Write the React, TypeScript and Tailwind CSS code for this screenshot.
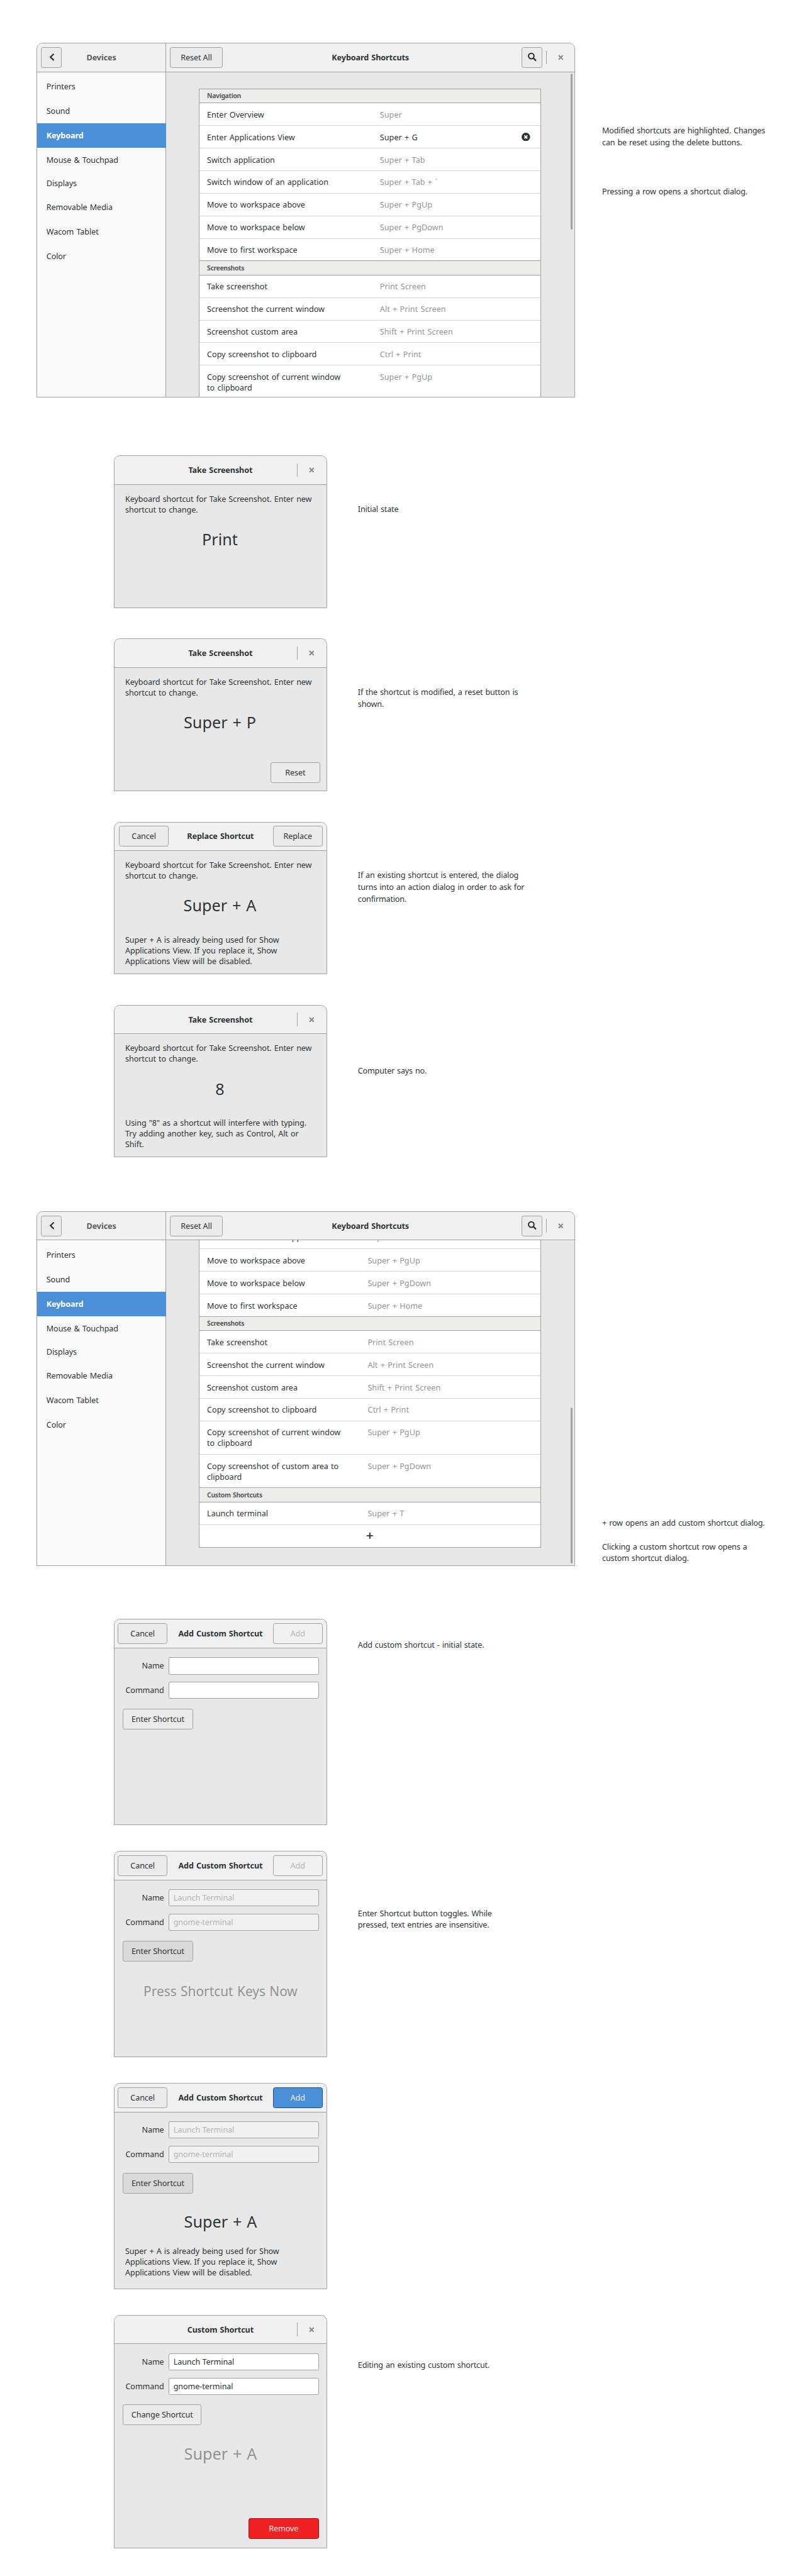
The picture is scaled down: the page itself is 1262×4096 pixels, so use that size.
import React from "react";
import type { ReactNode } from "react";

/* ---------- icons ---------- */

function BackIcon() {
  return (
    <svg className="ml-px h-3 w-[9px]" viewBox="0 0 9 12" fill="none">
      <path d="M7.7 0.8 L2.3 6 L7.7 11.2" stroke="#2e3436" strokeWidth="2.3" />
    </svg>
  );
}

function SearchIcon() {
  return (
    <svg className="h-4 w-4" viewBox="0 0 16 16" fill="none" stroke="#2e3436">
      <circle cx="6.6" cy="6.3" r="4.5" strokeWidth="2.1" />
      <path d="M9.8 9.5 L14.4 14.1" strokeWidth="2.5" />
    </svg>
  );
}

function CloseIcon() {
  return (
    <svg className="h-[9px] w-[9px]" viewBox="0 0 9 9" fill="none">
      <path d="M1 1 L8 8 M8 1 L1 8" stroke="#8b8d8b" strokeWidth="2.3" />
    </svg>
  );
}

function DeleteIcon() {
  return (
    <svg className="h-3.5 w-3.5" viewBox="0 0 14 14" fill="none">
      <circle cx="7" cy="7" r="7" fill="#2e3436" />
      <path d="M4.5 4.5 L9.5 9.5 M9.5 4.5 L4.5 9.5" stroke="#fff" strokeWidth="2" />
    </svg>
  );
}

function PlusIcon() {
  return (
    <svg className="h-2.5 w-2.5" viewBox="0 0 10 10" fill="none">
      <path d="M5 0 V10 M0 5 H10" stroke="#2e3436" strokeWidth="2" />
    </svg>
  );
}

/* ---------- basic controls ---------- */

const buttonTones = {
  normal: "border-[#a1a1a1] bg-[#ebebeb] text-[#2e3436]",
  disabled: "border-[#a1a1a1] bg-[#f1f1f1] text-[#b4b5b5]",
  pressed: "border-[#a1a1a1] bg-[#dadada] text-[#2e3436]",
  suggested: "border-[#1c5187] bg-[#4a90d9] text-[#eef4fb]",
  destructive: "border-[#a41014] bg-[#ef2123] text-[#fde9e9]",
};

function Button({
  tone = "normal",
  size = "w-[81px]",
  children,
}: {
  tone?: keyof typeof buttonTones;
  size?: string;
  children: ReactNode;
}) {
  return (
    <button
      type="button"
      className={`flex h-[34px] shrink-0 items-center justify-center rounded-[3.5px] border ${size} ${buttonTones[tone]}`}
    >
      {children}
    </button>
  );
}

function CloseArea({ margin = "" }: { margin?: string }) {
  return (
    <div className={`flex items-center ${margin}`}>
      <div className="h-[22px] w-px bg-[#a1a1a1]" />
      <div className="flex w-[46px] justify-center">
        <CloseIcon />
      </div>
    </div>
  );
}

/* ---------- settings window ---------- */

type Shortcut = { name: ReactNode; keys: string; modified?: boolean; tall?: boolean };
type Group = { title?: string; rows: Shortcut[]; addRow?: boolean };

const windowOfApp: Shortcut = { name: "Switch window of an application", keys: "Super + Tab + `" };

const workspaceRows: Shortcut[] = [
  { name: "Move to workspace above", keys: "Super + PgUp" },
  { name: "Move to workspace below", keys: "Super + PgDown" },
  { name: "Move to first workspace", keys: "Super + Home" },
];

const screenshotRows: Shortcut[] = [
  { name: "Take screenshot", keys: "Print Screen" },
  { name: "Screenshot the current window", keys: "Alt + Print Screen" },
  { name: "Screenshot custom area", keys: "Shift + Print Screen" },
  { name: "Copy screenshot to clipboard", keys: "Ctrl + Print" },
  {
    name: (
      <>
        Copy screenshot of current window
        <br />
        to clipboard
      </>
    ),
    keys: "Super + PgUp",
    tall: true,
  },
];

const topGroups: Group[] = [
  {
    title: "Navigation",
    rows: [
      { name: "Enter Overview", keys: "Super" },
      { name: "Enter Applications View", keys: "Super + G", modified: true },
      { name: "Switch application", keys: "Super + Tab" },
      windowOfApp,
      ...workspaceRows,
    ],
  },
  { title: "Screenshots", rows: screenshotRows },
];

const scrolledGroups: Group[] = [
  { rows: [windowOfApp, ...workspaceRows] },
  {
    title: "Screenshots",
    rows: [
      ...screenshotRows,
      {
        name: (
          <>
            Copy screenshot of custom area to
            <br />
            clipboard
          </>
        ),
        keys: "Super + PgDown",
        tall: true,
      },
    ],
  },
  { title: "Custom Shortcuts", rows: [{ name: "Launch terminal", keys: "Super + T" }], addRow: true },
];

function ShortcutRow({
  row,
  nameWidth,
  last,
  scrolledOff,
}: {
  row: Shortcut;
  nameWidth: string;
  last: boolean;
  scrolledOff: boolean;
}) {
  return (
    <div
      className={`flex shrink-0 border-b bg-white pl-3 tracking-[-0.03px] ${
        scrolledOff ? "pt-[9.2px]" : "pt-2.5"
      } ${row.tall ? "h-[55px]" : "h-[37px]"} ${last ? "border-[#a1a1a1]" : "border-[#d3d3cf]"}`}
    >
      <div className={`shrink-0 ${nameWidth}`}>{row.name}</div>
      <div className={`tracking-[0.04px] ${row.modified ? "" : "text-[#929595]"}`}>{row.keys}</div>
      {row.modified && (
        <div className="mt-px mr-[17px] ml-auto">
          <DeleteIcon />
        </div>
      )}
    </div>
  );
}

function ShortcutTable({ groups, nameWidth }: { groups: Group[]; nameWidth: string }) {
  return (
    <div className="flex w-[560px] flex-col border-x border-[#a1a1a1]">
      {groups.map((group, g) => (
        <React.Fragment key={g}>
          {group.title && (
            <div className="flex h-[23px] shrink-0 items-center border-b border-[#a1a1a1] bg-[#ededeb] pl-3 text-[10.75px] font-bold tracking-[-0.38px] text-[#5a5d5c]">
              {group.title}
            </div>
          )}
          {group.rows.map((row, i) => (
            <ShortcutRow
              key={i}
              row={row}
              nameWidth={nameWidth}
              last={i === group.rows.length - 1 && !group.addRow}
              scrolledOff={i === 0 && !group.title}
            />
          ))}
          {group.addRow && (
            <div className="flex h-[37px] shrink-0 items-center justify-center border-b border-[#a1a1a1] bg-white">
              <PlusIcon />
            </div>
          )}
        </React.Fragment>
      ))}
    </div>
  );
}

const sections = [
  "Printers",
  "Sound",
  "Keyboard",
  "Mouse & Touchpad",
  "Displays",
  "Removable Media",
  "Wacom Tablet",
  "Color",
];

function SettingsWindow({ scrollbar, children }: { scrollbar: string; children: ReactNode }) {
  return (
    <div className="flex h-[581px] w-[882px] shrink-0 flex-col overflow-hidden rounded-t-[10px] border border-[#a1a1a1] bg-[#e8e8e8]">
      <header className="flex h-[47px] shrink-0 border-b border-[#a1a1a1] bg-[#f1f1f1]">
        <div className="flex w-[211px] shrink-0 items-center border-r border-[#a1a1a1] px-1.5">
          <Button size="w-[34px]">
            <BackIcon />
          </Button>
          <h2 className="mr-[34px] flex-1 text-center font-bold text-[#5a5d5c]">Devices</h2>
        </div>
        <div className="grid flex-1 grid-cols-[1fr_auto_1fr] items-center pl-1.5">
          <div className="flex">
            <Button size="w-[87px]">Reset All</Button>
          </div>
          <h1 className="mr-1.5 font-bold">Keyboard Shortcuts</h1>
          <div className="flex items-center justify-end gap-1.5">
            <Button size="w-[34px]">
              <SearchIcon />
            </Button>
            <CloseArea />
          </div>
        </div>
      </header>
      <div className="flex min-h-0 flex-1">
        <nav className="w-[211px] shrink-0 border-r border-[#a1a1a1] bg-[#fafafa] pt-1">
          {sections.map((name) => (
            <div
              key={name}
              className={`flex h-10 items-center pl-[15px] ${
                name === "Keyboard" ? "-mr-px bg-[#4a90d9] font-bold text-white" : ""
              } ${name === "Displays" ? "-mt-0.5" : ""}`}
            >
              {name}
            </div>
          ))}
        </nav>
        <main className="flex min-w-0 flex-1 justify-between overflow-hidden">
          <div className="ml-[54px]">{children}</div>
          <div className={`mr-[3px] h-[255px] w-1 rounded-full bg-[#a1a1a1] ${scrollbar}`} />
        </main>
      </div>
    </div>
  );
}

/* ---------- dialogs ---------- */

function Dialog({
  title,
  left,
  right,
  height = "h-[250px]",
  leftPad = "pl-1.5",
  children,
}: {
  title: string;
  left?: ReactNode;
  right?: ReactNode;
  height?: string;
  leftPad?: string;
  children: ReactNode;
}) {
  return (
    <div
      className={`flex w-[350px] shrink-0 flex-col overflow-hidden rounded-t-[10px] border border-[#a1a1a1] bg-[#e8e8e8] ${height}`}
    >
      <header className="grid h-[47px] shrink-0 grid-cols-[1fr_auto_1fr] items-center border-b border-[#a1a1a1] bg-[#f1f1f1]">
        <div className={`flex ${leftPad}`}>{left}</div>
        <h2 className="font-bold">{title}</h2>
        <div className="flex justify-end">
          {right ? <div className="pr-[7px]">{right}</div> : <CloseArea margin="mr-0.5" />}
        </div>
      </header>
      {children}
    </div>
  );
}

function KeyCombo({ children, space, muted }: { children: ReactNode; space: string; muted?: boolean }) {
  return (
    <p
      className={`text-center text-[26px] leading-[30px] tracking-normal [word-spacing:1.3px] ${space} ${
        muted ? "text-[#929493]" : ""
      }`}
    >
      {children}
    </p>
  );
}

function CaptureDialog({
  combo,
  title = "Take Screenshot",
  left,
  right,
  message,
  footer,
}: {
  combo: string;
  title?: string;
  left?: ReactNode;
  right?: ReactNode;
  message?: ReactNode;
  footer?: ReactNode;
}) {
  return (
    <Dialog title={title} left={left} right={right} leftPad="pl-2">
      <p className="mt-[14.5px] pl-[18px] whitespace-nowrap">
        Keyboard shortcut for Take Screenshot. Enter new
        <br />
        shortcut to change.
      </p>
      <KeyCombo space="mt-[25px] pr-0.5">{combo}</KeyCombo>
      {message && <p className="mt-[32.6px] pl-[18px] whitespace-nowrap">{message}</p>}
      {footer && <div className="mt-auto flex justify-end pr-[11px] pb-3">{footer}</div>}
    </Dialog>
  );
}

function Field({ label, value, disabled }: { label: string; value: string; disabled?: boolean }) {
  return (
    <label className="flex items-center justify-end gap-[7.5px]">
      <span>{label}</span>
      <input
        readOnly
        value={value}
        className={`h-7 w-[246px] rounded-[2.5px] border border-[#a1a1a1] px-[7px] outline-none ${
          disabled ? "bg-[#f1f1f1] text-[#b4b5b5]" : "bg-white"
        }`}
      />
    </label>
  );
}

function CustomDialog({
  title = "Add Custom Shortcut",
  left,
  right,
  height = "h-[338px]",
  name = "",
  command = "",
  disabled,
  trigger,
  children,
}: {
  title?: string;
  left?: ReactNode;
  right?: ReactNode;
  height?: string;
  name?: string;
  command?: string;
  disabled?: boolean;
  trigger: ReactNode;
  children?: ReactNode;
}) {
  return (
    <Dialog title={title} left={left} right={right} height={height}>
      <div className="mt-[15px] flex flex-col gap-3 pr-[13px]">
        <Field label="Name" value={name} disabled={disabled} />
        <Field label="Command" value={command} disabled={disabled} />
      </div>
      <div className="mt-4 flex pl-3.5">{trigger}</div>
      {children}
    </Dialog>
  );
}

const replaceWarning = (
  <>
    Super + A is already being used for Show
    <br />
    Applications View. If you replace it, Show
    <br />
    Applications View will be disabled.
  </>
);

/* ---------- page ---------- */

function Note({ space, children }: { space: string; children: ReactNode }) {
  return (
    <p className={`leading-[19.4px] tracking-[-0.2px] whitespace-nowrap ${space}`}>{children}</p>
  );
}

function DialogRow({ dialog, note }: { dialog: ReactNode; note?: ReactNode }) {
  return (
    <section className="flex gap-[50px] pl-[186px]">
      {dialog}
      {note}
    </section>
  );
}

export default function App() {
  return (
    <div className="w-[1300px] bg-white pt-[70px] font-['Noto_Sans',sans-serif] text-[13px] leading-[17.5px] tracking-[-0.1px] text-[#2e3436] [word-spacing:1px] [zoom:0.9707]">
      <section className="flex gap-11 pl-[60px]">
        <SettingsWindow scrollbar="mt-[3px]">
          <div className="mt-[27px] border-t border-[#a1a1a1]">
            <ShortcutTable groups={topGroups} nameWidth="w-[283px]" />
          </div>
        </SettingsWindow>
        <div>
          <Note space="mt-[135.3px]">
            Modified shortcuts are highlighted. Changes
            <br />
            can be reset using the delete buttons.
          </Note>
          <Note space="mt-[61.2px]">Pressing a row opens a shortcut dialog.</Note>
        </div>
      </section>

      <div className="mt-[95px] flex flex-col gap-[50px]">
        <DialogRow
          dialog={<CaptureDialog combo="Print" />}
          note={<Note space="mt-[79.3px]">Initial state</Note>}
        />
        <DialogRow
          dialog={<CaptureDialog combo="Super + P" footer={<Button>Reset</Button>} />}
          note={
            <Note space="mt-[79.3px]">
              If the shortcut is modified, a reset button is
              <br />
              shown.
            </Note>
          }
        />
        <DialogRow
          dialog={
            <CaptureDialog
              combo="Super + A"
              title="Replace Shortcut"
              left={<Button>Cancel</Button>}
              right={<Button>Replace</Button>}
              message={replaceWarning}
            />
          }
          note={
            <Note space="mt-[79.3px]">
              If an existing shortcut is entered, the dialog
              <br />
              turns into an action dialog in order to ask for
              <br />
              confirmation.
            </Note>
          }
        />
        <DialogRow
          dialog={
            <CaptureDialog
              combo="8"
              message={
                <>
                  Using "8" as a shortcut will interfere with typing.
                  <br />
                  Try adding another key, such as Control, Alt or
                  <br />
                  Shift.
                </>
              }
            />
          }
          note={<Note space="mt-[99.3px]">Computer says no.</Note>}
        />
      </div>

      <section className="mt-[88px] flex gap-11 pl-[60px]">
        <SettingsWindow scrollbar="mt-[274px]">
          <div className="-mt-[23px]">
            <ShortcutTable groups={scrolledGroups} nameWidth="w-[263px]" />
          </div>
        </SettingsWindow>
        <div>
          <Note space="mt-[501.4px]">+ row opens an add custom shortcut dialog.</Note>
          <Note space="mt-[19.9px]">
            Clicking a custom shortcut row opens a
            <br />
            custom shortcut dialog.
          </Note>
        </div>
      </section>

      <div className="mt-[87px] flex flex-col gap-[42px]">
        <DialogRow
          dialog={
            <CustomDialog
              left={<Button>Cancel</Button>}
              right={<Button tone="disabled">Add</Button>}
              trigger={<Button size="w-[115px]">Enter Shortcut</Button>}
            />
          }
          note={<Note space="mt-[33.3px]">Add custom shortcut - initial state.</Note>}
        />
        <DialogRow
          dialog={
            <CustomDialog
              left={<Button>Cancel</Button>}
              right={<Button tone="disabled">Add</Button>}
              name="Launch Terminal"
              command="gnome-terminal"
              disabled
              trigger={
                <Button tone="pressed" size="w-[115px]">
                  Enter Shortcut
                </Button>
              }
            >
              <p className="mt-[33.8px] text-center text-[21.5px] leading-[30px] tracking-normal text-[#929493]">
                Press Shortcut Keys Now
              </p>
            </CustomDialog>
          }
          note={
            <Note space="mt-[93.3px]">
              Enter Shortcut button toggles. While
              <br />
              pressed, text entries are insensitive.
            </Note>
          }
        />
        <DialogRow
          dialog={
            <CustomDialog
              left={<Button>Cancel</Button>}
              right={<Button tone="suggested">Add</Button>}
              name="Launch Terminal"
              command="gnome-terminal"
              disabled
              trigger={
                <Button tone="pressed" size="w-[115px]">
                  Enter Shortcut
                </Button>
              }
            >
              <KeyCombo space="mt-[31.5px]">Super + A</KeyCombo>
              <p className="mt-[24.4px] pl-[18px] whitespace-nowrap">{replaceWarning}</p>
            </CustomDialog>
          }
        />
        <DialogRow
          dialog={
            <CustomDialog
              title="Custom Shortcut"
              height="h-[382px]"
              name="Launch Terminal"
              command="gnome-terminal"
              trigger={<Button size="w-[129px]">Change Shortcut</Button>}
            >
              <KeyCombo space="mt-[31.5px]" muted>
                Super + A
              </KeyCombo>
              <div className="mt-auto flex justify-end pr-[13px] pb-3.5">
                <Button tone="destructive" size="w-[115px]">
                  Remove
                </Button>
              </div>
            </CustomDialog>
          }
          note={<Note space="mt-[73.3px]">Editing an existing custom shortcut.</Note>}
        />
      </div>
    </div>
  );
}
